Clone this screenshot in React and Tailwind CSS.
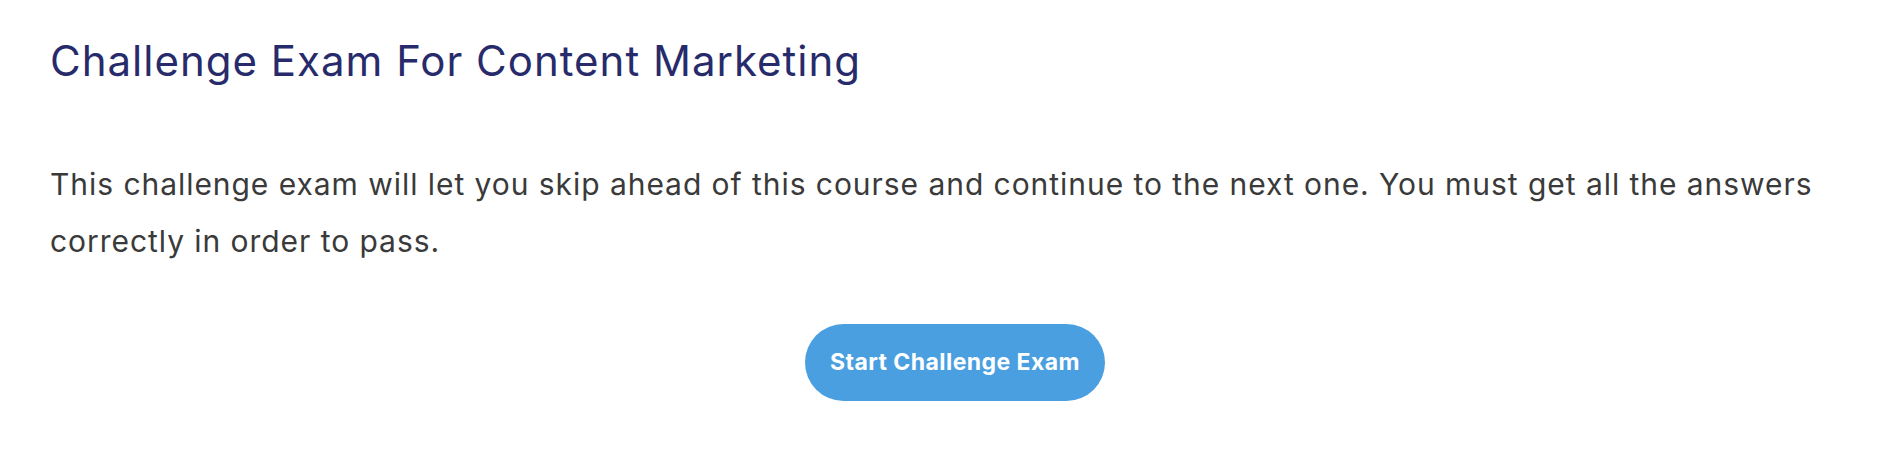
export default function App() {
  return (
    <div className="min-h-screen bg-white font-['Inter','Noto_Sans',sans-serif]">
      <div className="pl-[50px] pr-[18px] pt-[37px]">
        <h1 className="text-[42px] leading-[48px] font-normal tracking-[1px] text-[#282b6b]">
          Challenge Exam For Content Marketing
        </h1>
        <p className="mt-[71px] text-[30px] leading-[57px] tracking-[0.95px] text-[#3a3a3a]">
          This challenge exam will let you skip ahead of this course and continue to the next one. You must get all the answers correctly in order to pass.
        </p>
        <div className="mt-[54px] flex justify-center">
          <button className="h-[77px] w-[300px] rounded-full bg-[#4a9fe1] text-[23px] font-bold tracking-[0.45px] text-white">
            Start Challenge Exam
          </button>
        </div>
      </div>
    </div>
  );
}
